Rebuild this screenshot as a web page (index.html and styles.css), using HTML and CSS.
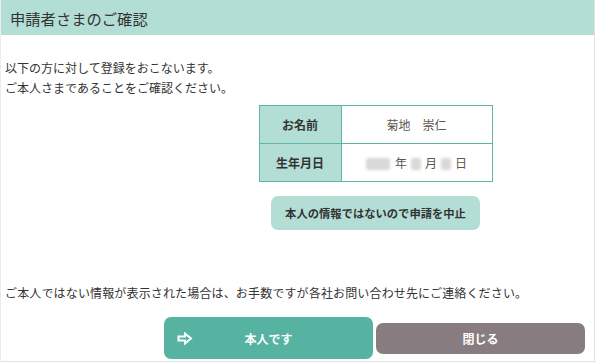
FILE: index.html
```html
<!DOCTYPE html>
<html lang="ja">
<head>
<meta charset="utf-8">
<link rel="stylesheet" href="styles.css">
</head>
<body>
<div class="page">
  <header class="head"><h1 class="title">申請者さまのご確認</h1></header>
  <div class="intro">
    <p>以下の方に対して登録をおこないます。</p>
    <p>ご本人さまであることをご確認ください。</p>
  </div>
  <div class="col">
    <table class="info">
      <tr><th>お名前</th><td>菊地　崇仁</td></tr>
      <tr><th>生年月日</th><td><span class="blur b1"></span>年<span class="blur b2"></span>月<span class="blur b2"></span>日</td></tr>
    </table>
    <button class="cancel">本人の情報ではないので申請を中止</button>
  </div>
  <p class="note">ご本人ではない情報が表示された場合は、お手数ですが各社お問い合わせ先にご連絡ください。</p>
  <div class="actions">
    <button class="btn ok">
      <svg class="arrow" width="16" height="13" viewBox="0 0 16 13"><path d="M1.5 4.5h6.5V1.5l6 5-6 5v-3H1.5z" fill="none" stroke="#fff" stroke-width="2" stroke-linejoin="miter"/></svg>
      <span>本人です</span>
    </button>
    <button class="btn close">閉じる</button>
  </div>
</div>
</body>
</html>
```
FILE: styles.css
```css
* { box-sizing: border-box; }
html, body { margin: 0; padding: 0; background: #fff; }
body { font-family: "Noto Sans CJK JP", "Noto Sans", sans-serif; color: #333; }
.page {
  width: 595px;
  height: 362px;
  border-left: 1px solid #ececec;
  border-right: 1px solid #e4e4e4;
  border-bottom: 1px solid #e4e4e4;
}
.head {
  height: 35px;
  background: #b3ded5;
  display: flex;
  align-items: center;
  padding-left: 9px;
}
.title { margin: 0; font-size: 15.3px; font-weight: 400; color: #333; }
.intro { padding: 23px 0 0 4px; }
.intro p { margin: 0; font-size: 12px; line-height: 20px; }
.col {
  margin-top: 7px;
  margin-left: 156px;
  display: flex;
  flex-direction: column;
  align-items: center;
}
.info {
  border-collapse: collapse;
  width: 234px;
  font-size: 12px;
}
.info th, .info td {
  border: 1px solid #62b5a5;
  height: 38px;
  padding: 0;
  text-align: center;
}
.info th { width: 82px; background: #b3ded5; font-weight: 700; color: #333; }
.info td { color: #5e5650; }
.blur {
  display: inline-block;
  height: 12px;
  vertical-align: -2px;
  background: #d8d8d8;
  filter: blur(1.5px);
  border-radius: 2px;
}
.b1 { width: 24px; margin-right: 5px; }
.b2 { width: 10px; margin: 0 4px; }
.cancel {
  margin-top: 14px;
  width: 209px;
  height: 34px;
  border: none;
  border-radius: 7px;
  background: #b3ded5;
  font-family: inherit;
  font-size: 11.3px;
  font-weight: 700;
  color: #333;
  padding: 0;
}
.note { margin: 53px 0 0 4px; font-size: 12px; line-height: 20px; letter-spacing: 0.15px; }
.actions {
  margin-top: 14px;
  margin-left: 163px;
  display: flex;
  align-items: center;
  gap: 3px;
}
.btn {
  width: 209px;
  border: none;
  font-family: inherit;
  font-size: 12px;
  font-weight: 700;
  color: #fff;
  padding: 0;
}
.ok {
  height: 42px;
  border-radius: 7px;
  background: #56b3a1;
  display: flex;
  align-items: center;
  position: relative;
  justify-content: center;
}
.arrow { position: absolute; left: 13px; top: 15px; }
.close {
  height: 31px;
  border-radius: 7px;
  background: #877d80;
}
```
